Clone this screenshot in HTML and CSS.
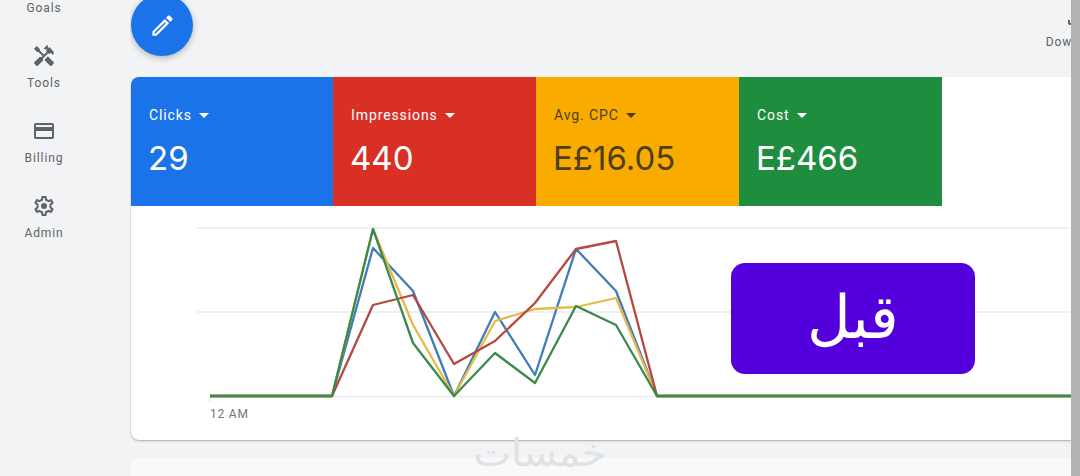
FILE: index.html
```html
<!DOCTYPE html>
<html lang="en">
<head>
<meta charset="utf-8">
<title>Overview</title>
<link rel="stylesheet" href="styles.css">
</head>
<body>
<div class="app">
  <nav class="sidebar">
    <div class="nav-label nav-label-first">Goals</div>
    <div class="nav-item">
      <svg class="nav-icon" viewBox="0 0 24 24"><path d="M21.67,18.17l-5.3-5.3h-0.99l-2.54,2.54v0.99l5.3,5.3c0.39,0.39,1.02,0.39,1.41,0l2.12-2.12C22.06,19.2,22.06,18.56,21.67,18.17z"/><path d="M17.34,10.19l1.41-1.41l2.12,2.12c1.17-1.17,1.17-3.07,0-4.24l-3.54-3.54l-1.41,1.41V1.71L15.22,1l-3.54,3.54l0.71,0.71h2.83l-1.41,1.41l1.06,1.06l-2.89,2.89L7.85,6.48V5.06L4.83,2.04L2,4.87l3.03,3.03h1.41l4.13,4.13l-0.85,0.85H7.6l-5.3,5.3c-0.39,0.39-0.39,1.02,0,1.41l2.12,2.12c0.39,0.39,1.02,0.39,1.41,0l5.3-5.3v-2.12l5.15-5.15L17.34,10.19z"/></svg>
      <div class="nav-label">Tools</div>
    </div>
    <div class="nav-item">
      <svg class="nav-icon" viewBox="0 0 24 24"><path d="M20 4H4c-1.11 0-1.99.89-1.99 2L2 18c0 1.11.89 2 2 2h16c1.11 0 2-.89 2-2V6c0-1.11-.89-2-2-2zm0 14H4v-6h16v6zm0-10H4V6h16v2z"/></svg>
      <div class="nav-label">Billing</div>
    </div>
    <div class="nav-item">
      <svg class="nav-icon" viewBox="0 0 24 24"><path d="M19.43 12.98c.04-.32.07-.64.07-.98 0-.34-.03-.66-.07-.98l2.11-1.65c.19-.15.24-.42.12-.64l-2-3.46c-.09-.16-.26-.25-.44-.25-.06 0-.12.01-.17.03l-2.49 1c-.52-.4-1.08-.73-1.69-.98l-.38-2.65C14.46 2.18 14.25 2 14 2h-4c-.25 0-.46.18-.49.42l-.38 2.65c-.61.25-1.17.59-1.69.98l-2.49-1c-.06-.02-.12-.03-.18-.03-.17 0-.34.09-.43.25l-2 3.46c-.13.22-.07.49.12.64l2.11 1.65c-.04.32-.07.65-.07.98 0 .33.03.66.07.98l-2.11 1.65c-.19.15-.24.42-.12.64l2 3.46c.09.16.26.25.44.25.06 0 .12-.01.17-.03l2.49-1c.52.4 1.08.73 1.69.98l.38 2.65c.03.24.24.42.49.42h4c.25 0 .46-.18.49-.42l.38-2.65c.61-.25 1.17-.59 1.69-.98l2.49 1c.06.02.12.03.18.03.17 0 .34-.09.43-.25l2-3.46c.12-.22.07-.49-.12-.64l-2.11-1.65zm-1.98-1.71c.04.31.05.52.05.73 0 .21-.02.43-.05.73l-.14 1.13.89.7 1.08.84-.7 1.21-1.27-.51-1.04-.42-.9.68c-.43.32-.84.56-1.25.73l-1.06.43-.16 1.13-.2 1.35h-1.4l-.19-1.35-.16-1.13-1.06-.43c-.43-.18-.83-.41-1.23-.71l-.91-.7-1.06.43-1.27.51-.7-1.21 1.08-.84.89-.7-.14-1.13c-.03-.31-.05-.54-.05-.74s.02-.43.05-.73l.14-1.13-.89-.7-1.08-.84.7-1.21 1.27.51 1.04.42.9-.68c.43-.32.84-.56 1.25-.73l1.06-.43.16-1.13.2-1.35h1.39l.19 1.35.16 1.13 1.06.43c.43.18.83.41 1.23.71l.91.7 1.06-.43 1.27-.51.7 1.21-1.07.85-.89.7.14 1.13z"/><circle cx="12" cy="12" r="3"/></svg>
      <div class="nav-label">Admin</div>
    </div>
  </nav>

  <main class="main">
    <div class="toolbar">
      <button class="fab" type="button">
        <svg class="fab-icon" viewBox="0 0 24 24"><path d="M14.06 9.02l.92.92L5.92 19H5v-.92l9.06-9.06M17.66 3c-.25 0-.51.1-.7.29l-1.83 1.83 3.75 3.75 1.83-1.83c.39-.39.39-1.02 0-1.41l-2.34-2.34c-.2-.2-.45-.29-.71-.29zm-3.6 3.19L3 17.25V21h3.75L17.81 9.94l-3.75-3.75z"/></svg>
      </button>
      <div class="download">
        <svg class="download-icon" viewBox="0 0 24 24"><path d="M18 15v3H6v-3H4v3c0 1.1.9 2 2 2h12c1.1 0 2-.9 2-2v-3h-2z"/><path d="M17 11l-1.41-1.41L13 12.17V4h-2v8.17L8.41 9.59 7 11l5 5 5-5z"/></svg>
        <div class="download-label">Download</div>
      </div>
    </div>

    <section class="card">
      <div class="tiles">
        <div class="tile tile-blue">
          <div class="tile-label">Clicks<span class="caret"></span></div>
          <div class="tile-value">29</div>
        </div>
        <div class="tile tile-red">
          <div class="tile-label">Impressions<span class="caret"></span></div>
          <div class="tile-value">440</div>
        </div>
        <div class="tile tile-yellow">
          <div class="tile-label">Avg. CPC<span class="caret"></span></div>
          <div class="tile-value">E£16.05</div>
        </div>
        <div class="tile tile-green">
          <div class="tile-label">Cost<span class="caret"></span></div>
          <div class="tile-value">E£466</div>
        </div>
      </div>
      <svg class="chart" viewBox="131 206 940 234">
        <g class="grid">
          <line x1="197" y1="228" x2="1071" y2="228"/>
          <line x1="197" y1="312" x2="1071" y2="312"/>
          <line x1="210" y1="396.5" x2="1071" y2="396.5"/>
          <line x1="210" y1="396" x2="210" y2="402"/>
        </g>
        <g class="series">
          <polyline class="s-blue" points="210,396 332,396 373,248 413,291 454,396 495,312 535,375 576,249 616,291 657,396 1071,396"/>
          <polyline class="s-yellow" points="210,396 332,396 373,229 413,325 454,396 495,321 535,309 576,307 616,298 657,396 1071,396"/>
          <polyline class="s-red" points="210,396 332,396 373,305 413,295 454,364 495,341 535,303 576,249 616,241 657,396 1071,396"/>
          <polyline class="s-green" points="210,396 332,396 373,229 413,343 454,396 495,353 535,383 576,306 616,325 657,396 1071,396"/>
        </g>
        <text class="axis-label" x="210" y="418">12 AM</text>
      </svg>
    </section>

    <section class="card-next"></section>
  </main>

  <div class="scrollbar"></div>

  <div class="badge" dir="rtl" lang="ar">قبل</div>
  <div class="watermark" dir="rtl" lang="ar">خمسات</div>
</div>
</body>
</html>
```

FILE: styles.css
```css
* { box-sizing: border-box; }

html, body {
  margin: 0;
  height: 100%;
  overflow: hidden;
}

body {
  background: #f1f3f4;
  font-family: Roboto, "Liberation Sans", sans-serif;
  color: #5f6368;
}

.app {
  position: relative;
  display: flex;
  width: 1080px;
  height: 476px;
  overflow: hidden;
}

.sidebar {
  flex: none;
  width: 130px;
  padding: 1px 42px 0 0;
  display: flex;
  flex-direction: column;
}

.nav-item {
  display: flex;
  flex-direction: column;
  align-items: center;
  padding-top: 28px;
  gap: 8px;
}

.nav-icon {
  display: block;
  width: 24px;
  height: 24px;
  fill: #5f6368;
}

.nav-label {
  font-size: 12px;
  line-height: 15px;
  letter-spacing: 0.9px;
  color: #5f6368;
  text-align: center;
}

.main {
  flex: 1;
  min-width: 0;
  overflow: hidden;
  display: flex;
  flex-direction: column;
}

.toolbar {
  flex: none;
  display: flex;
  justify-content: space-between;
  align-items: flex-start;
  height: 83px;
  margin-top: -6px;
  padding-left: 1px;
}

.fab {
  flex: none;
  width: 62px;
  height: 62px;
  padding: 0;
  border: 0;
  border-radius: 50%;
  background: #1a73e8;
  box-shadow: 0 2px 6px rgba(60, 64, 67, 0.35);
  display: flex;
  align-items: center;
  justify-content: center;
}

.fab-icon {
  width: 27px;
  height: 27px;
  fill: #fff;
}

.download {
  flex: none;
  width: 60px;
  margin-right: -35px;
  padding-top: 11px;
  display: flex;
  flex-direction: column;
  align-items: center;
}

.download-icon {
  width: 24px;
  height: 24px;
  fill: #5f6368;
}

.download-label {
  font-size: 12px;
  line-height: 15px;
  letter-spacing: 0.9px;
  margin-top: 6px;
}

.card {
  flex: none;
  height: 363px;
  margin-left: 1px;
  background: #fff;
  border-radius: 8px 0 0 8px;
  box-shadow: 0 1px 2px rgba(60, 64, 67, 0.4);
  overflow: hidden;
}

.tiles {
  display: flex;
  height: 129px;
}

.tile {
  flex: none;
  width: 203px;
  padding: 29px 0 0 18px;
  color: #fff;
}

.tile-blue { width: 202px; background: #1a73e8; }
.tile-red { background: #d93025; }
.tile-yellow { background: #f9ab00; color: #4d3f12; }
.tile-green { background: #1e8e3e; }

.tile-label {
  display: flex;
  align-items: center;
  font-size: 14px;
  line-height: 18px;
  letter-spacing: 0.9px;
}

.caret {
  width: 0;
  height: 0;
  margin-left: 7px;
  border-left: 5px solid transparent;
  border-right: 5px solid transparent;
  border-top: 5px solid currentColor;
}

.tile-value {
  margin-top: 14px;
  margin-left: -1px;
  font-family: Inter, Roboto, sans-serif;
  font-size: 33px;
  line-height: 40px;
  font-weight: 400;
}

.chart {
  display: block;
  width: 940px;
  height: 234px;
}

.grid line {
  stroke: #e8eaed;
  stroke-width: 1.5;
}

.series polyline {
  fill: none;
  stroke-width: 2.3;
  stroke-linejoin: round;
}

.s-blue { stroke: #3f7db8; }
.s-yellow { stroke: #e8b84a; }
.s-red { stroke: #b5483f; }
.s-green { stroke: #3a8a4c; }

.axis-label {
  font-family: Roboto, "Liberation Sans", sans-serif;
  font-size: 12px;
  letter-spacing: 0.8px;
  fill: #70757a;
}

.card-next {
  flex: none;
  height: 60px;
  margin: 18px 0 0 1px;
  background: #f8f9fa;
  border-radius: 8px 0 0 0;
}

.scrollbar {
  flex: none;
  width: 9px;
  background: #b1b2b4;
}

.badge {
  position: absolute;
  left: 731px;
  top: 263px;
  width: 244px;
  height: 111px;
  border-radius: 14px;
  background: #5300dd;
  color: #fff;
  font-family: serif;
  font-size: 60px;
  line-height: 111px;
  text-align: center;
}

.watermark {
  position: absolute;
  left: 470px;
  top: 430px;
  width: 140px;
  color: #e0e2e4;
  font-family: "DejaVu Sans", sans-serif;
  font-size: 38px;
  line-height: 46px;
  text-align: center;
  transform: scaleX(1.05);
}
```
